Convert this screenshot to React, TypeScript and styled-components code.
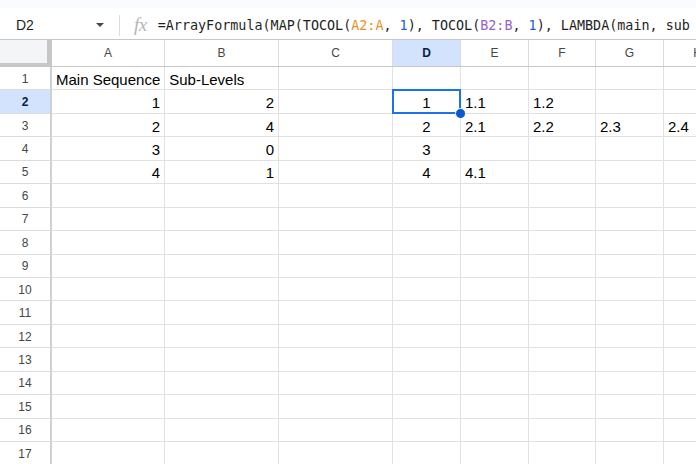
import React from 'react'
import styled, { createGlobalStyle } from 'styled-components'

const COLS = [
  { key: 'A', width: 113 },
  { key: 'B', width: 114 },
  { key: 'C', width: 114 },
  { key: 'D', width: 68 },
  { key: 'E', width: 68 },
  { key: 'F', width: 67 },
  { key: 'G', width: 68 },
  { key: 'H', width: 68 },
]

type Align = 'left' | 'right' | 'center'
type CellData = { v: string; align: Align }

const L = (v: string): CellData => ({ v, align: 'left' })
const R = (v: string): CellData => ({ v, align: 'right' })
const C = (v: string): CellData => ({ v, align: 'center' })

// rows 1..17, keyed by column letter
const DATA: Record<number, Record<string, CellData>> = {
  1: { A: L('Main Sequence'), B: L('Sub-Levels') },
  2: { A: R('1'), B: R('2'), D: C('1'), E: L('1.1'), F: L('1.2') },
  3: { A: R('2'), B: R('4'), D: C('2'), E: L('2.1'), F: L('2.2'), G: L('2.3'), H: L('2.4') },
  4: { A: R('3'), B: R('0'), D: C('3') },
  5: { A: R('4'), B: R('1'), D: C('4'), E: L('4.1') },
}

const ROWS = Array.from({ length: 17 }, (_, i) => i + 1)

export default function App() {
  return (
    <>
      <GlobalStyle />
      <Page>
        <TopStrip />
        <FormulaBar>
          <NameBox>
            <NameText>D2</NameText>
            <Caret />
          </NameBox>
          <Divider />
          <FxIcon>fx</FxIcon>
          <Formula>
            =ArrayFormula(MAP(TOCOL(<Ref $c='#e8912d'>A2:A</Ref>, <Ref $c='#1a62d6'>1</Ref>), TOCOL(
            <Ref $c='#9a5fc9'>B2:B</Ref>, <Ref $c='#1a62d6'>1</Ref>), LAMBDA(main, sub
          </Formula>
        </FormulaBar>

        <Grid>
          <HeaderRow>
            <Corner />
            {COLS.map(c => (
              <ColHeader key={c.key} $w={c.width} $active={c.key === 'D'}>
                {c.key}
              </ColHeader>
            ))}
          </HeaderRow>

          {ROWS.map(r => (
            <Row key={r}>
              <RowHeader $active={r === 2}>{r}</RowHeader>
              {COLS.map(c => {
                const cell = DATA[r]?.[c.key]
                const selected = r === 2 && c.key === 'D'
                return (
                  <Cell key={c.key} $w={c.width} $align={cell?.align ?? 'left'}>
                    {cell?.v}
                    {selected && (
                      <>
                        <Selection />
                        <Handle />
                      </>
                    )}
                  </Cell>
                )
              })}
            </Row>
          ))}
        </Grid>
      </Page>
    </>
  )
}

/* global */
const GlobalStyle = createGlobalStyle`
  html, body {
    margin: 0;
    padding: 0;
    background: #fff;
    overflow: hidden;
  }
  * { box-sizing: border-box; }
`

const Page = styled.div`
  width: 696px;
  height: 464px;
  overflow: hidden;
  font-family: 'Liberation Sans', Arial, sans-serif;
  color: #000;
`

/* formula bar */
const TopStrip = styled.div`
  height: 8px;
  background: #f9fbfd;
`

const FormulaBar = styled.div`
  display: flex;
  align-items: center;
  height: 32px;
  padding-top: 3px;
  border-bottom: 1px solid #c7c7c7;
  background: #fff;
`

const NameBox = styled.div`
  display: flex;
  align-items: center;
  justify-content: space-between;
  width: 119px;
  padding: 0 15px 0 16px;
`

const NameText = styled.span`
  font-size: 14px;
  color: #1f1f1f;
`

const Caret = styled.span`
  width: 0;
  height: 0;
  border-left: 4.5px solid transparent;
  border-right: 4.5px solid transparent;
  border-top: 4.5px solid #444746;
`

const Divider = styled.div`
  width: 1px;
  height: 21px;
  background: #dadce0;
`

const FxIcon = styled.span`
  margin: 0 11px 0 14px;
  font-family: 'Liberation Serif', 'Times New Roman', serif;
  font-style: italic;
  font-size: 19px;
  color: #b5b5b5;
  letter-spacing: -0.5px;
`

const Formula = styled.div`
  flex: 1;
  white-space: nowrap;
  overflow: hidden;
  font-family: 'DejaVu Sans Mono', 'Liberation Mono', monospace;
  font-size: 13.4px;
  color: #1f1f1f;
`

const Ref = styled.span<{ $c: string }>`
  color: ${p => p.$c};
`

/* grid */
const Grid = styled.div`
  display: flex;
  flex-direction: column;
`

const HeaderRow = styled.div`
  display: flex;
  height: 27px;
  border-bottom: 1px solid #c7c7c7;
`

const Corner = styled.div`
  flex: 0 0 52px;
  background: #f4f5f6;
  border-right: 5px solid #c7c7c7;
  border-bottom: 4px solid #c7c7c7;
  margin-bottom: -1px;
`

const ColHeader = styled.div<{ $w: number; $active?: boolean }>`
  flex: 0 0 ${p => p.$w}px;
  display: flex;
  align-items: center;
  justify-content: center;
  border-right: 1px solid #dadce0;
  font-size: 12px;
  background: ${p => (p.$active ? '#d3e3fd' : '#fff')};
  color: ${p => (p.$active ? '#041e49' : '#444746')};
  font-weight: ${p => (p.$active ? 700 : 400)};
`

const Row = styled.div`
  display: flex;
  height: 23.45px;
  flex: 0 0 23.45px;
`

const RowHeader = styled.div<{ $active?: boolean }>`
  flex: 0 0 52px;
  display: flex;
  align-items: center;
  justify-content: center;
  padding-top: 1px;
  border-right: 2px solid #d0d0d0;
  border-bottom: 1px solid #dadce0;
  font-size: 12px;
  background: ${p => (p.$active ? '#d3e3fd' : '#fff')};
  color: ${p => (p.$active ? '#041e49' : '#444746')};
  font-weight: ${p => (p.$active ? 700 : 400)};
`

const Cell = styled.div<{ $w: number; $align: Align }>`
  position: relative;
  flex: 0 0 ${p => p.$w}px;
  display: flex;
  align-items: center;
  justify-content: ${p =>
    p.$align === 'right' ? 'flex-end' : p.$align === 'center' ? 'center' : 'flex-start'};
  padding: 2px 4px 0 4px;
  border-right: 1px solid #e1e1e1;
  border-bottom: 1px solid #e1e1e1;
  font-size: 15px;
  white-space: nowrap;
`

const Selection = styled.div`
  position: absolute;
  left: -1px;
  top: -1px;
  right: -1px;
  bottom: -1px;
  border: 2px solid #1a73e8;
  pointer-events: none;
`

const Handle = styled.div`
  position: absolute;
  right: -6px;
  bottom: -6px;
  width: 11px;
  height: 11px;
  border-radius: 50%;
  background: #0b57d0;
  border: 1px solid #fff;
  z-index: 2;
`
